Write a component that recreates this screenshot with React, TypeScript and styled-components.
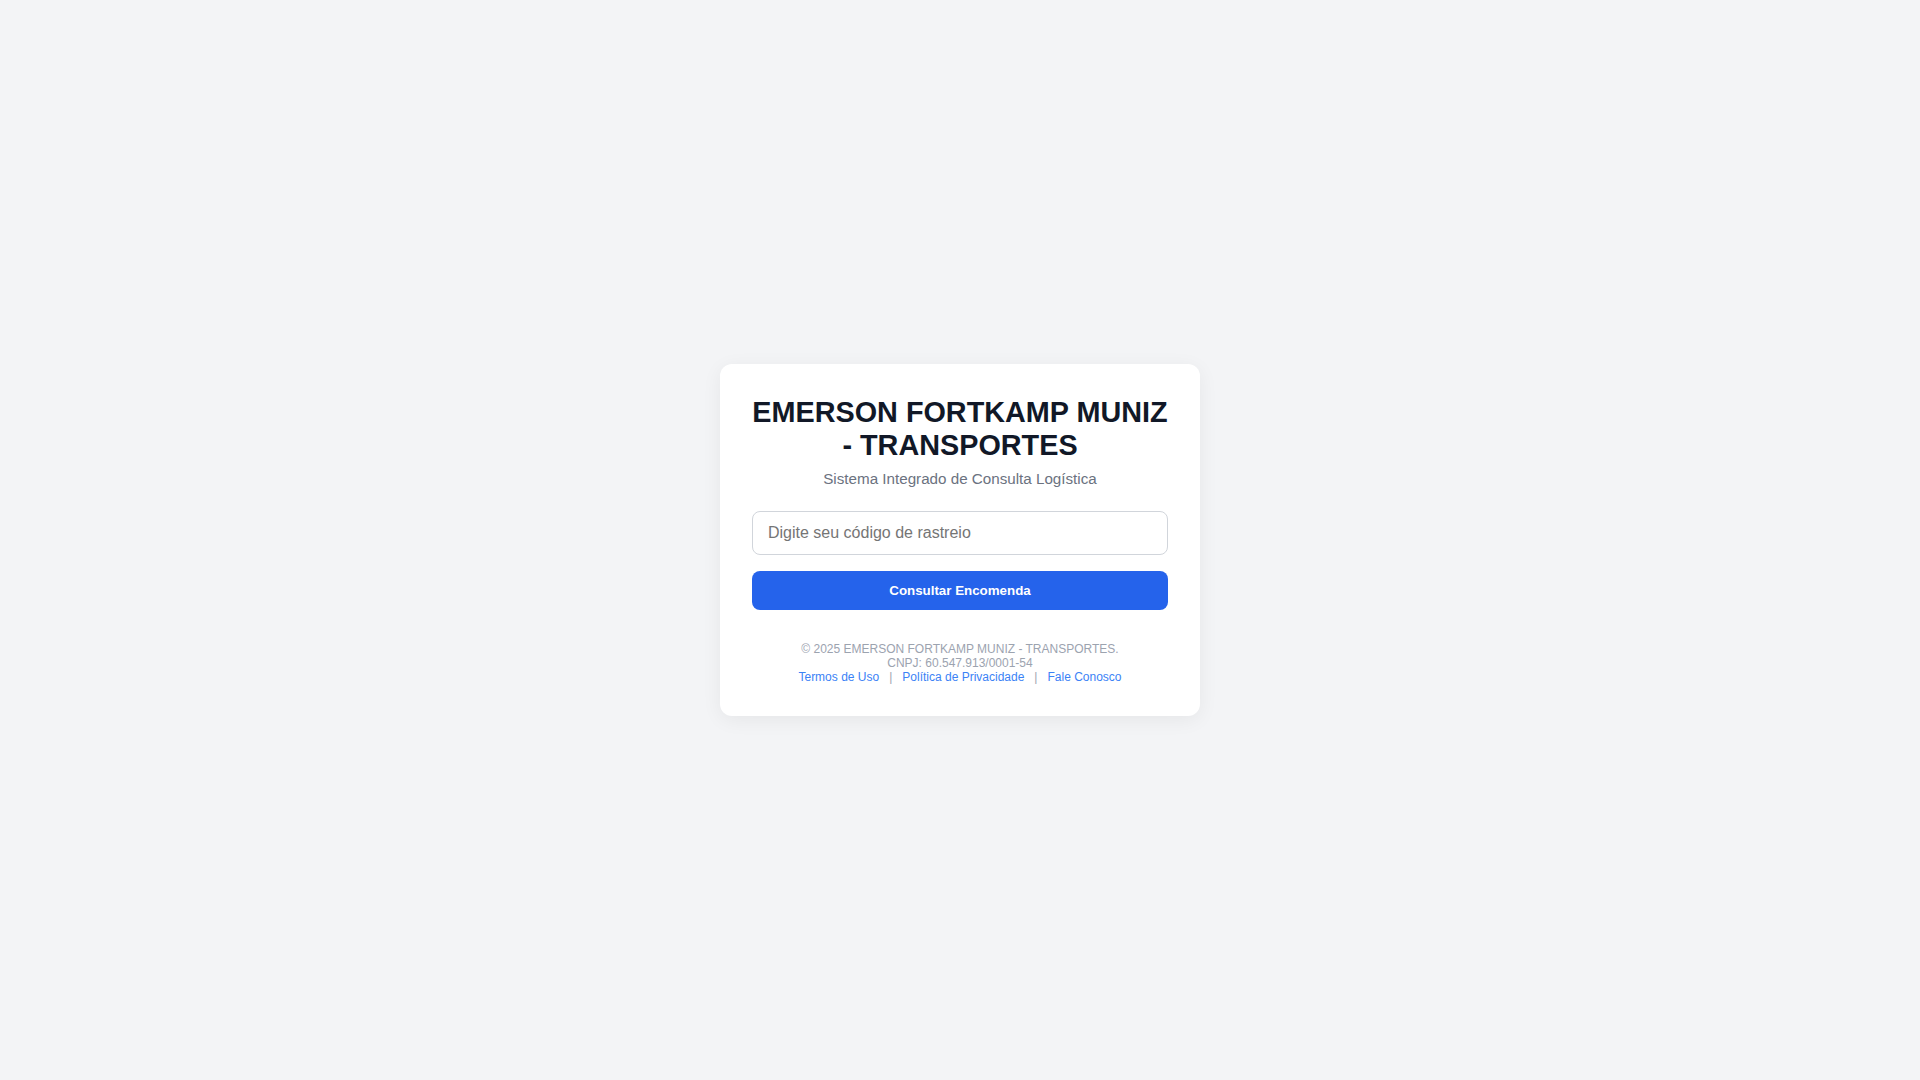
import styled, { createGlobalStyle } from "styled-components";
import { useState } from "react";

const GlobalStyle = createGlobalStyle`
  * {
    box-sizing: border-box;
  }

  html,
  body,
  #root {
    height: 100%;
  }

  body {
    margin: 0;
    background-color: #f3f4f6;
    font-family: "Liberation Sans", Arial, sans-serif;
  }
`;

const PageWrapper = styled.div`
  display: flex;
  align-items: center;
  justify-content: center;
  height: 100%;
`;

const Card = styled.div`
  width: 480px;
  padding: 32px;
  background-color: #fff;
  border-radius: 12px;
  box-shadow: 0 4px 20px rgba(0, 0, 0, 0.06);
  text-align: center;
`;

const Title = styled.h1`
  margin: 0 0 8px;
  font-size: 28.8px;
  font-weight: 700;
  color: #111827;
`;

const Subtitle = styled.p`
  margin: 0 0 24px;
  font-size: 15.2px;
  color: #6b7280;
`;

const TrackingInput = styled.input`
  display: block;
  width: 100%;
  padding: 12px 15px;
  border: 1px solid #d1d5db;
  border-radius: 8px;
  font-family: inherit;
  font-size: 16px;
  color: #111827;
  outline: none;

  &::placeholder {
    color: #757575;
  }

  &:focus {
    border-color: #2563eb;
  }
`;

const SubmitButton = styled.button`
  display: block;
  width: 100%;
  margin-top: 16px;
  padding: 12px;
  border: none;
  border-radius: 8px;
  background-color: #2563eb;
  color: #fff;
  font-family: inherit;
  font-size: 13.333px;
  font-weight: 700;
  cursor: pointer;

  &:hover {
    background-color: #1d4ed8;
  }
`;

const Footer = styled.footer`
  margin-top: 32px;
  font-size: 12px;
  color: #9ca3af;
`;

const FooterLinks = styled.div`
  display: flex;
  justify-content: center;
`;

const FooterLink = styled.a`
  color: #3b82f6;
  text-decoration: none;
  cursor: pointer;

  &:hover {
    text-decoration: underline;
  }
`;

const Separator = styled.span`
  margin: 0 10px;
`;

const links = ["Termos de Uso", "Política de Privacidade", "Fale Conosco"];

export default function App() {
  const [code, setCode] = useState("");

  return (
    <>
      <GlobalStyle />
      <PageWrapper>
        <Card>
          <Title>EMERSON FORTKAMP MUNIZ - TRANSPORTES</Title>
          <Subtitle>Sistema Integrado de Consulta Logística</Subtitle>

          <TrackingInput
            value={code}
            onChange={(e) => setCode(e.target.value)}
            placeholder="Digite seu código de rastreio"
          />
          <SubmitButton type="button">Consultar Encomenda</SubmitButton>

          <Footer>
            <div>© 2025 EMERSON FORTKAMP MUNIZ - TRANSPORTES.</div>
            <div>CNPJ: 60.547.913/0001-54</div>
            <FooterLinks>
              {links.map((label, i) => (
                <span key={label}>
                  {i > 0 && <Separator>|</Separator>}
                  <FooterLink>{label}</FooterLink>
                </span>
              ))}
            </FooterLinks>
          </Footer>
        </Card>
      </PageWrapper>
    </>
  );
}
